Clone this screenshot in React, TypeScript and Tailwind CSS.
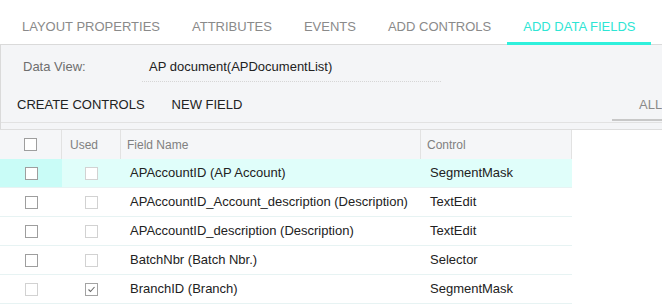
import React from "react"

const tabs = ["LAYOUT PROPERTIES", "ATTRIBUTES", "EVENTS", "ADD CONTROLS", "ADD DATA FIELDS"]

const rows = [
  { name: "APAccountID (AP Account)", control: "SegmentMask", used: false, selected: true, enabled: true },
  { name: "APAccountID_Account_description (Description)", control: "TextEdit", used: false, selected: false, enabled: true },
  { name: "APAccountID_description (Description)", control: "TextEdit", used: false, selected: false, enabled: true },
  { name: "BatchNbr (Batch Nbr.)", control: "Selector", used: false, selected: false, enabled: true },
  { name: "BranchID (Branch)", control: "SegmentMask", used: true, selected: false, enabled: false },
]

function Check({ checked = false, light = false }: { checked?: boolean; light?: boolean }) {
  return (
    <div
      className={`flex h-[13px] w-[13px] items-center justify-center border bg-white ${
        checked ? "border-[#a3a3a3]" : light ? "border-[#d2d2d2]" : "border-[#9e9e9e]"
      }`}
    >
      {checked && (
        <svg width="9" height="9" viewBox="0 0 9 9">
          <polyline points="1.5,4.5 3.5,6.5 7.5,2" fill="none" stroke="#6b6b6b" strokeWidth="1.1" />
        </svg>
      )}
    </div>
  )
}

export default function App() {
  return (
    <div className="h-[305px] w-[662px] overflow-hidden bg-white font-['Liberation_Sans',Arial,sans-serif]">
      {/* Tabs */}
      <div className="flex h-[44px] pl-[6px]">
        {tabs.map((t, i) => {
          const active = i === tabs.length - 1
          return (
            <div
              key={t}
              className={`relative flex items-center px-[16px] pt-[9px] text-[13px] ${
                active ? "text-[#2ee5d4]" : "text-[#8a8a8a]"
              }`}
            >
              {t}
              {active && <div className="absolute bottom-[-1px] left-0 right-0 z-10 h-[3px] bg-[#2ff0dc]" />}
            </div>
          )
        })}
      </div>

      {/* Panel */}
      <div className="border-l border-t border-[#dadada] bg-[#f4f5f7]">
        <div className="flex h-[43px] items-start pl-[22px] pt-[12px] text-[13px]">
          <div className="w-[119px] text-[#6e6e6e]">Data View:</div>
          <div className="w-[299px] border-b border-dotted border-[#d6d6d6] pb-[4px] pl-[7px] text-[#222]">
            AP document(APDocumentList)
          </div>
        </div>
        <div className="flex h-[35px] items-center border-b border-[#e2e2e2] pb-[1px] text-[13px] text-[#222]">
          <div className="pl-[16px]">CREATE CONTROLS</div>
          <div className="ml-[27px]">NEW FIELD</div>
          <div className="ml-auto flex h-full w-[50px] items-center border-b-2 border-[#c8c8c8] pl-[27px] pt-[2px] text-[#8a8a8a]">
            ALL
          </div>
        </div>
        <div className="h-[6px]" />
      </div>

      {/* Grid */}
      <div className="border-t border-[#dedede]">
        <div className="flex h-[29px] w-[572px] border-r border-[#e2e2e2] bg-[#f5f6f8] text-[12px] text-[#808080]">
          <div className="flex w-[62px] items-center justify-center border-r border-[#e2e2e2]">
            <Check />
          </div>
          <div className="flex w-[59px] items-center border-r border-[#e2e2e2] pl-[8px]">Used</div>
          <div className="flex w-[300px] items-center border-r border-[#e2e2e2] pl-[6px]">Field Name</div>
          <div className="flex flex-1 items-center pl-[6px]">Control</div>
        </div>
        {rows.map((r) => (
          <div
            key={r.name}
            className={`flex h-[29px] w-[572px] border-b border-[#e7f3f3] text-[13px] text-[#222] ${
              r.selected ? "bg-[#e0fefa]" : "bg-white"
            }`}
          >
            <div className={`flex w-[62px] items-center justify-center ${r.selected ? "bg-[#c9fcf7]" : ""}`}>
              <Check light={!r.enabled} />
            </div>
            <div className="flex w-[59px] items-center justify-center">
              <Check checked={r.used} light />
            </div>
            <div className="flex w-[300px] items-center pl-[9px]">{r.name}</div>
            <div className="flex flex-1 items-center pl-[9px]">{r.control}</div>
          </div>
        ))}
      </div>
    </div>
  )
}
